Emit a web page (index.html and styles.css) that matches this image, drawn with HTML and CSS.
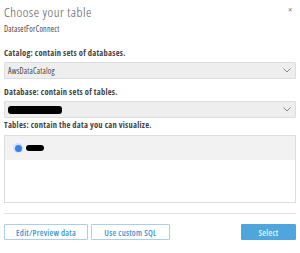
FILE: index.html
```html
<!DOCTYPE html>
<html>
<head>
<meta charset="utf-8">
<link rel="stylesheet" href="styles.css">
</head>
<body>
<div class="dialog">
  <div class="header">
    <div class="title">Choose your table</div>
    <span class="close">×</span>
  </div>
  <div class="subtitle">DatasetForConnect</div>
  <div class="label label-first">Catalog: contain sets of databases.</div>
  <div class="select"><span class="value">AwsDataCatalog</span>
    <svg class="chev" width="8" height="5" viewBox="0 0 8 5"><path d="M0.5 0.5 L4 4 L7.5 0.5" fill="none" stroke="#888" stroke-width="1"/></svg>
  </div>
  <div class="label">Database: contain sets of tables.</div>
  <div class="select"><span class="redact redact-db"></span>
    <svg class="chev" width="8" height="5" viewBox="0 0 8 5"><path d="M0.5 0.5 L4 4 L7.5 0.5" fill="none" stroke="#888" stroke-width="1"/></svg>
  </div>
  <div class="label label-tables">Tables: contain the data you can visualize.</div>
  <div class="tables">
    <div class="row">
      <span class="radio"><span class="dot"></span></span>
      <span class="redact redact-tbl"></span>
    </div>
  </div>
  <div class="divider"></div>
  <div class="footer">
    <div class="left">
      <button class="btn">Edit/Preview data</button>
      <button class="btn btn-sql">Use custom SQL</button>
    </div>
    <button class="btn btn-primary">Select</button>
  </div>
</div>
</body>
</html>
```
FILE: styles.css
```css
html, body {
  margin: 0;
  padding: 0;
  background: #fff;
}
.dialog {
  width: 300px;
  height: 253px;
  box-sizing: border-box;
  padding: 0 4px;
  font-family: "Open Sans", "Liberation Sans", sans-serif;
  font-stretch: condensed;
  color: #444;
  display: flex;
  flex-direction: column;
}
.header {
  display: flex;
  justify-content: space-between;
  align-items: flex-start;
  height: 23px;
}
.title {
  font-size: 13.5px;
  font-weight: 300;
  color: #555;
  line-height: 16px;
  margin-top: 4px;
  letter-spacing: 0.5px;
}
.close {
  font-size: 9px;
  color: #777;
  line-height: 10px;
  margin-top: 5px;
  margin-right: 4px;
}
.subtitle {
  font-size: 8px;
  color: #444;
  line-height: 12px;
  letter-spacing: 0.2px;
}
.label {
  font-size: 8.5px;
  font-weight: 700;
  color: #444;
  line-height: 12px;
  margin-top: 7px;
  margin-bottom: 3px;
  letter-spacing: 0.25px;
}
.label-first {
  margin-top: 12px;
}
.label-tables {
  margin-top: 1px;
  margin-bottom: 4px;
}
.select {
  height: 17px;
  box-sizing: border-box;
  background: #eee;
  border: 1px solid #ddd;
  border-radius: 1px;
  display: flex;
  align-items: center;
  justify-content: space-between;
  padding: 0 4px 0 3px;
}
.value {
  font-size: 8px;
  color: #444;
  letter-spacing: 0.2px;
}
.chev {
  display: block;
}
.redact {
  display: block;
  background: #000;
  border-radius: 3px;
}
.redact-db {
  width: 54px;
  height: 8px;
  margin-top: 1px;
}
.tables {
  height: 68px;
  box-sizing: border-box;
  border: 1px solid #ddd;
}
.row {
  height: 24px;
  background: #f2f2f2;
  display: flex;
  align-items: center;
  padding-left: 8px;
  gap: 3px;
}
.radio {
  width: 10px;
  height: 10px;
  box-sizing: border-box;
  border-radius: 50%;
  background: #cfe1fb;
  display: flex;
  align-items: center;
  justify-content: center;
}
.dot {
  width: 7px;
  height: 7px;
  border-radius: 50%;
  background: #3d7fe8;
}
.redact-tbl {
  width: 18px;
  height: 6px;
}
.divider {
  margin-top: 10px;
  height: 1px;
  background: #e2e2e2;
}
.footer {
  margin-top: 10px;
  display: flex;
  justify-content: space-between;
  align-items: center;
}
.left {
  display: flex;
  gap: 3px;
}
.btn {
  height: 16px;
  box-sizing: border-box;
  border: 1px solid #a9cfec;
  background: #fff;
  color: #3f94d1;
  font-family: "Open Sans", "Liberation Sans", sans-serif;
  font-stretch: condensed;
  font-size: 8.5px;
  font-weight: 600;
  letter-spacing: 0.25px;
  padding: 0;
  border-radius: 1px;
}
.left .btn {
  width: 84px;
}
.left .btn-sql {
  width: 79px;
}
.btn-primary {
  width: 55px;
  background: #4ea6dd;
  border-color: #4ea6dd;
  color: #eaf5fc;
}
```
